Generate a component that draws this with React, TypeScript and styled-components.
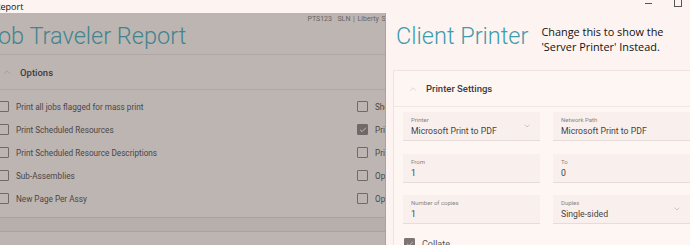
import styled, { createGlobalStyle } from "styled-components";
import { ChevronUp, ChevronDown, Check } from "lucide-react";

const GlobalStyle = createGlobalStyle`
  html, body {
    margin: 0;
    padding: 0;
    background: #fdf4f1;
    overflow: hidden;
  }
  body {
    font-family: Roboto, "Liberation Sans", sans-serif;
    color: #333;
  }
`;

const Window = styled.div`
  width: 690px;
  height: 245px;
  display: grid;
  grid-template-rows: 13px 1fr;
  overflow: hidden;
`;

const TitleBar = styled.div`
  display: flex;
  align-items: center;
  justify-content: space-between;
  background: #fdf4f1;
  font-family: "Open Sans", "Liberation Sans", sans-serif;
  font-size: 9px;
  color: #111;
  padding-right: 8px;
  overflow: hidden;

  span {
    margin-left: -5px;
  }
`;

const WindowControls = styled.div`
  display: flex;
  align-items: flex-start;
  gap: 22px;
  height: 13px;
`;

const Minimize = styled.div`
  width: 7px;
  height: 1px;
  background: #555;
  margin-top: 3px;
`;

const Maximize = styled.div`
  width: 6px;
  height: 7px;
  border: 1px solid #555;
  border-top: none;
  margin-top: -1px;
`;

const Main = styled.div`
  display: flex;
  overflow: hidden;
`;

const Backdrop = styled.div`
  width: 385px;
  flex-shrink: 0;
  background: #bdb5b2;
  overflow: hidden;
  border-right: 1px solid #aaa2a0;
`;

const ReportPage = styled.div`
  width: 420px;
  margin-left: -12px;
  display: flex;
  flex-direction: column;
`;

const Meta = styled.div`
  align-self: flex-end;
  margin-right: 20px;
  margin-top: 2px;
  font-size: 7px;
  color: #6a6462;
  white-space: nowrap;
  word-spacing: 1px;
`;

const PageTitle = styled.h1<{ $tone: string }>`
  margin: 0;
  font-size: 23.5px;
  font-weight: 300;
  line-height: 27px;
  color: ${(p) => p.$tone};
  white-space: nowrap;
`;

const ReportTitle = styled(PageTitle)`
  margin: 0 0 4px -3px;
`;

const Divider = styled.div<{ $color: string }>`
  height: 1px;
  background: ${(p) => p.$color};
`;

const SectionHeader = styled.div`
  height: 34px;
  display: flex;
  align-items: center;
  gap: 8px;
  padding-left: 14px;
  font-size: 9.5px;
  font-weight: 500;
  color: #3f3b3a;

  svg {
    color: #948d8b;
  }
`;

const OptionsGrid = styled.div`
  display: grid;
  grid-template-columns: 359px 1fr;
  grid-auto-rows: 23px;
  padding: 5px 0 7px 10px;
`;

const CheckRow = styled.label`
  display: flex;
  align-items: center;
  gap: 7px;
  font-size: 8.2px;
  color: #4a4645;
  white-space: nowrap;
`;

const Box = styled.span<{ $checked?: boolean; $tone: string }>`
  width: 9px;
  height: 9px;
  flex-shrink: 0;
  border: 1.3px solid ${(p) => p.$tone};
  border-radius: 1px;
  background: ${(p) => (p.$checked ? p.$tone : "transparent")};
  display: flex;
  align-items: center;
  justify-content: center;
  color: #e8e2e0;
`;

const FooterBand = styled.div`
  height: 13px;
  background: #b7afac;
  border-bottom: 1px solid #aaa2a0;
`;

const Drawer = styled.div`
  flex: 1;
  display: flex;
  flex-direction: column;
  padding-left: 7px;
  background: #fdf4f1;
  overflow: hidden;

  > * {
    flex-shrink: 0;
  }
`;

const DrawerHead = styled.div`
  display: flex;
  align-items: flex-start;
  gap: 13px;
  height: 47px;
  padding-top: 10px;
  padding-left: 3px;
`;

const Note = styled.div`
  font-family: "Open Sans", "Liberation Sans", sans-serif;
  font-size: 10.9px;
  line-height: 15px;
  color: #111;
  margin-top: 1px;
  white-space: nowrap;
`;

const Card = styled.div`
  width: 320px;
  border: 1px solid #ede4e1;
  background: #fdf6f3;
  display: flex;
  flex-direction: column;
`;

const CardHeader = styled.div`
  height: 35px;
  display: flex;
  align-items: center;
  gap: 8px;
  padding-left: 14px;
  font-size: 9.5px;
  font-weight: 500;
  color: #3f3b3a;
  border-bottom: 1px solid #f1e8e5;

  svg {
    color: #c9c1bf;
  }
`;

const FieldGrid = styled.div`
  display: grid;
  grid-template-columns: 137px 137px;
  column-gap: 13px;
  row-gap: 12.5px;
  padding: 5px 9px 0;
`;

const Field = styled.div`
  height: 29px;
  background: #f9f0ed;
  border-bottom: 1px solid #e6dcd9;
  padding: 4px 8px 0;
  box-sizing: border-box;
  display: flex;
  flex-direction: column;
  position: relative;
`;

const FieldLabel = styled.span`
  font-size: 6px;
  color: #8a8381;
  line-height: 8px;
`;

const FieldValue = styled.span`
  font-size: 8.7px;
  color: #444;
  line-height: 14px;
`;

const Caret = styled.span`
  position: absolute;
  right: 9px;
  top: 10px;
  color: #a29a98;
  display: flex;
`;

const CollateRow = styled(CheckRow)`
  padding: 14px 0 0 10px;
  color: #555;
  font-size: 9px;
`;

const leftOptions = [
  "Print all jobs flagged for mass print",
  "Print Scheduled Resources",
  "Print Scheduled Resource Descriptions",
  "Sub-Assemblies",
  "New Page Per Assy",
];

const rightOptions = [
  { label: "Show", checked: false },
  { label: "Print", checked: true },
  { label: "Print", checked: false },
  { label: "Op", checked: false },
  { label: "Op", checked: false },
];

const fields = [
  { label: "Printer", value: "Microsoft Print to PDF", select: true },
  { label: "Network Path", value: "Microsoft Print to PDF" },
  { label: "From", value: "1" },
  { label: "To", value: "0" },
  { label: "Number of copies", value: "1" },
  { label: "Duplex", value: "Single-sided", select: true },
];

function App() {
  return (
    <Window>
      <GlobalStyle />
      <TitleBar>
        <span>Report</span>
        <WindowControls>
          <Minimize />
          <Maximize />
        </WindowControls>
      </TitleBar>
      <Main>
        <Backdrop>
          <ReportPage>
            <Meta>PTS123 &nbsp;SLN | Liberty St</Meta>
            <ReportTitle $tone="#43848f">Job Traveler Report</ReportTitle>
            <Divider $color="#afa7a4" />
            <SectionHeader>
              <ChevronUp size={10} strokeWidth={1.5} />
              Options
            </SectionHeader>
            <Divider $color="#afa7a4" />
            <OptionsGrid>
              {leftOptions.map((label, i) => [
                <CheckRow key={`l${i}`}>
                  <Box $tone="#6f6967" />
                  {label}
                </CheckRow>,
                <CheckRow key={`r${i}`}>
                  <Box $tone="#6f6967" $checked={rightOptions[i].checked}>
                    {rightOptions[i].checked && <Check size={8} strokeWidth={2} />}
                  </Box>
                  {rightOptions[i].label}
                </CheckRow>,
              ])}
            </OptionsGrid>
            <Divider $color="#aaa2a0" />
            <FooterBand />
          </ReportPage>
        </Backdrop>
        <Drawer>
          <DrawerHead>
            <PageTitle $tone="#3e9cae">Client Printer</PageTitle>
            <Note>
              Change this to show the
              <br />
              'Server Printer' Instead.
            </Note>
          </DrawerHead>
          <Card>
            <CardHeader>
              <ChevronUp size={10} strokeWidth={1.5} />
              Printer Settings
            </CardHeader>
            <FieldGrid>
              {fields.map((f) => (
                <Field key={f.label}>
                  <FieldLabel>{f.label}</FieldLabel>
                  <FieldValue>{f.value}</FieldValue>
                  {f.select && (
                    <Caret>
                      <ChevronDown size={8} strokeWidth={1.5} />
                    </Caret>
                  )}
                </Field>
              ))}
            </FieldGrid>
            <CollateRow>
              <Box $tone="#7b7573" $checked>
                <Check size={8} strokeWidth={2} />
              </Box>
              Collate
            </CollateRow>
          </Card>
        </Drawer>
      </Main>
    </Window>
  );
}

export default App;
